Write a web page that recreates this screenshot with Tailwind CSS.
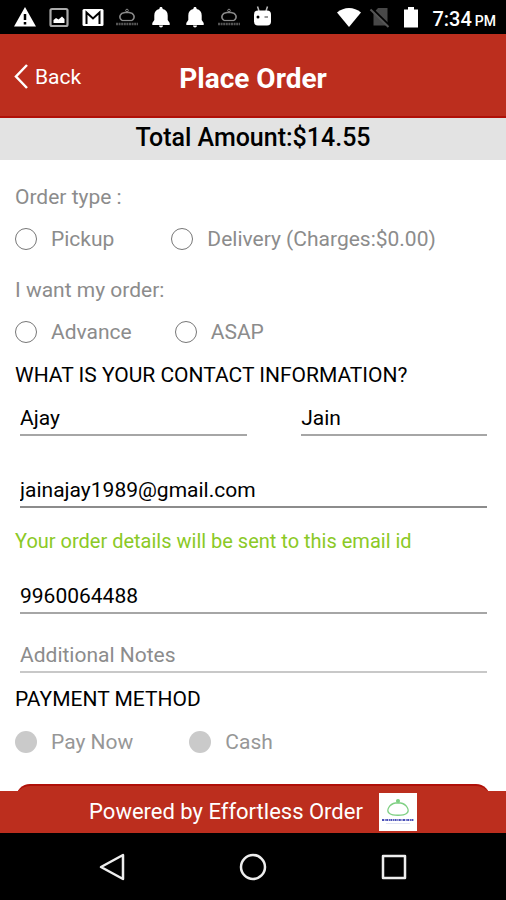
<!doctype html>
<html lang="en">
  <head>
    <meta charset="UTF-8" />
    <meta name="viewport" content="width=device-width, initial-scale=1.0" />
    <title>Place Order</title>
    <script src="https://cdn.jsdelivr.net/npm/@tailwindcss/browser@4"></script>
  </head>
  <body class="flex min-h-screen flex-col bg-white font-['Roboto',sans-serif] text-[21px] leading-7 text-black">
    <!-- Shared icons -->
    <svg class="hidden">
      <symbol id="bell" viewBox="0 0 24 24">
        <path d="M12 2c-1 0-1.600.6-1.600 1.500v.6C7 4.800 5.300 7.200 5.300 10.500v4.500L3.300 18v2h17.400v-2L18.700 15v-4.500c0-3.300-1.700-5.700-5.100-6.400v-.6C13.600 2.600 13 2 12 2zM10 20.500c0 1.200 1 2 2 2s2-.8 2-2z" fill="#fff" />
      </symbol>
      <symbol id="cloche" viewBox="0 0 24 24">
        <g fill="none" stroke="#8a8a8a">
          <path d="M7 15.500c-4-3-2-7.500 3-8h4c5 .5 7 5 3 8" stroke-width="1.500" />
          <path d="M7 15.500h10" stroke-width="1.200" />
          <circle cx="12" cy="5.500" r="1.300" />
          <path d="M1 19h22" stroke-width="2.500" stroke-dasharray="2 .6" stroke="#555" />
        </g>
      </symbol>
    </svg>

    <div class="flex h-[34px] items-center justify-between bg-black pr-[10px] pl-[13px]">
      <div class="flex gap-[10px]">
        <svg class="size-6" viewBox="0 0 24 24">
          <path d="M12 2 23 21.500H1z" fill="#fff" />
          <path d="M12 9v6M12 17v2.500" stroke="#000" stroke-width="2.500" />
        </svg>
        <svg class="size-6" viewBox="0 0 24 24">
          <rect x="3.500" y="4" width="17" height="17" rx="1.500" fill="none" stroke="#aaa" stroke-width="2.200" />
          <path d="M6.500 18v-3L9 13l2.500 1.500 3.500-3 2.500 2.500v4z" fill="#fff" />
        </svg>
        <svg class="size-6" viewBox="0 0 24 24">
          <rect x="1.500" y="4" width="21" height="17" rx="1.500" fill="#fff" />
          <path d="M5.500 19V7.500l6.500 6 6.500-6V19" fill="none" stroke="#000" stroke-width="2" />
        </svg>
        <svg class="size-6"><use href="#cloche" /></svg>
        <svg class="size-6"><use href="#bell" /></svg>
        <svg class="size-6"><use href="#bell" /></svg>
        <svg class="size-6"><use href="#cloche" /></svg>
        <svg class="size-6" viewBox="0 0 24 24">
          <path d="M6.500 1.500 8 6M16.500 1.500 15 6" stroke="#bbb" stroke-width="1.500" />
          <rect x="3" y="5.500" width="17" height="15" rx="4" fill="#fff" />
          <circle cx="7" cy="12" r="1.500" />
          <path d="M13.500 12h3.500" stroke="#777" stroke-width="1.500" />
        </svg>
      </div>
      <div class="flex items-center gap-[7px]">
        <svg class="size-6" viewBox="0 0 24 24">
          <path d="M0 7.500C7 1.500 17 1.500 24 7.500L12 22z" fill="#fff" />
        </svg>
        <svg class="size-6" viewBox="0 0 24 24">
          <path d="M10 3h9.500v17.500h-14V8z" fill="#484848" />
          <path d="M4 3.500 22 21" stroke="#000" stroke-width="2" />
          <path d="M2.500 4.500 20.500 22" stroke="#555" stroke-width="2" />
        </svg>
        <svg class="size-6" viewBox="0 0 24 24">
          <path d="M9 2h6v2.500h4V22.500H5v-18h4z" fill="#fff" />
        </svg>
        <div class="flex items-baseline gap-[3px] pt-1 pl-[2px] text-xl leading-6 font-medium text-white">
          <span>7:34</span>
          <span class="text-sm">PM</span>
        </div>
      </div>
    </div>

    <header class="grid h-[84px] grid-cols-[1fr_auto_1fr] items-center border-b-2 border-[#b01008] bg-[#bc2e1e] px-[14px] pt-1 text-white">
      <button type="button" class="flex items-center gap-[7px] text-left">
        <svg class="h-[26px] w-[14px]" viewBox="0 0 14 26" fill="none" stroke="#fff" stroke-width="2.500">
          <path d="M13 1 2 12.500l11 11.500" />
        </svg>
        Back
      </button>
      <h1 class="pt-1 text-[28px] font-bold">Place Order</h1>
    </header>

    <div class="h-[42px] bg-[#e3e3e3] pt-[6px] text-center text-[25px] font-medium">Total Amount:$14.55</div>

    <form class="pt-[23px] pr-[14px] pb-7 pl-[15px]">
      <fieldset class="text-[#8c8c8c]">
        <legend>Order type :</legend>
        <div class="mt-[14px] flex gap-[57px]">
          <label class="flex items-center gap-[14px]">
            <input type="radio" name="type" class="size-[22px] appearance-none rounded-full border border-[#777] checked:bg-[#777]" />
            Pickup
          </label>
          <label class="flex items-center gap-[14px]">
            <input type="radio" name="type" class="size-[22px] appearance-none rounded-full border border-[#777] checked:bg-[#777]" />
            Delivery (Charges:$0.00)
          </label>
        </div>
      </fieldset>

      <fieldset class="mt-[23px] text-[#8c8c8c]">
        <legend>I want my order:</legend>
        <div class="mt-[14px] flex gap-[43px]">
          <label class="flex items-center gap-[14px]">
            <input type="radio" name="time" class="size-[22px] appearance-none rounded-full border border-[#777] checked:bg-[#777]" />
            Advance
          </label>
          <label class="flex items-center gap-[14px]">
            <input type="radio" name="time" class="size-[22px] appearance-none rounded-full border border-[#777] checked:bg-[#777]" />
            ASAP
          </label>
        </div>
      </fieldset>

      <h2 class="mt-[15px]">WHAT IS YOUR CONTACT INFORMATION?</h2>
      <div class="mt-[15px] grid grid-cols-[11fr_9fr] gap-x-[54px] px-[5px]">
        <input type="text" aria-label="First name" value="Ajay" class="h-8 w-full min-w-0 border-b-2 border-[#a6a6a6] pb-[2px] outline-none" />
        <input type="text" aria-label="Last name" value="Jain" class="h-8 w-full min-w-0 border-b-2 border-[#a6a6a6] pb-[2px] outline-none" />
      </div>
      <div class="mt-10 px-[5px]">
        <input type="email" aria-label="Email" value="jainajay1989@gmail.com" class="block h-8 w-full border-b-2 border-[#8c8c8c] pb-[2px] outline-none" />
      </div>
      <p class="mt-[19px] text-xl leading-7 text-[#8bc926]">Your order details will be sent to this email id</p>
      <div class="mt-[27px] flex flex-col gap-[27px] px-[5px]">
        <input type="tel" aria-label="Phone" value="9960064488" class="h-8 w-full border-b-2 border-[#a6a6a6] pb-[2px] outline-none" />
        <input type="text" aria-label="Additional Notes" placeholder="Additional Notes" class="h-8 w-full border-b-2 border-[#c8c8c8] pb-[2px] outline-none placeholder:text-[#8c8c8c]" />
      </div>

      <fieldset class="mt-3">
        <legend>PAYMENT METHOD</legend>
        <div class="mt-[15px] flex gap-14 text-[#979797]">
          <label class="flex items-center gap-[14px]">
            <input type="radio" name="payment" disabled class="size-[22px] appearance-none rounded-full bg-[#cacaca]" />
            Pay Now
          </label>
          <label class="flex items-center gap-[14px]">
            <input type="radio" name="payment" disabled class="size-[22px] appearance-none rounded-full bg-[#cacaca]" />
            Cash
          </label>
        </div>
      </fieldset>
    </form>

    <footer class="mt-auto">
      <div class="mx-4 -mb-[13px] h-5 rounded-t-[14px] border-t-2 border-[#b01008] bg-[#bc2e1e]"></div>
      <div class="flex h-[42px] items-center justify-center gap-4 bg-[#bc2e1e] text-[22px] text-white">
        Powered by Effortless Order
        <svg class="size-[38px]" viewBox="0 0 38 38">
          <rect width="38" height="38" fill="#fff" />
          <g fill="none" stroke="#7fd083" stroke-width="1.300">
            <path d="M10.500 20.500c-4-3 0-9.500 6-10.500h5c6 1 10 7.500 6 10.500-3 2.300-14 2.300-17 0z" />
            <circle cx="19" cy="8" r="1.400" fill="#7fd083" />
          </g>
          <path d="M3 27h32" stroke="#4a50b8" stroke-width="2" stroke-dasharray="2 .7 1 .5" />
          <path d="M7 30.500h24" stroke="#e2e4f5" />
        </svg>
      </div>
      <nav class="flex h-[67px] items-center justify-center gap-[113px] bg-black">
        <button type="button" aria-label="Back">
          <svg class="size-7" viewBox="0 0 28 28" fill="none" stroke="#eee" stroke-width="2.500" stroke-linejoin="round">
            <path d="M25 2v24L3 14z" />
          </svg>
        </button>
        <button type="button" aria-label="Home">
          <svg class="size-7" viewBox="0 0 28 28" fill="none" stroke="#eee" stroke-width="2.500">
            <circle cx="14" cy="14" r="12" />
          </svg>
        </button>
        <button type="button" aria-label="Recent apps">
          <svg class="size-7" viewBox="0 0 28 28" fill="none" stroke="#eee" stroke-width="2.500" stroke-linejoin="round">
            <rect x="3" y="3" width="22" height="22" />
          </svg>
        </button>
      </nav>
    </footer>
  </body>
</html>
